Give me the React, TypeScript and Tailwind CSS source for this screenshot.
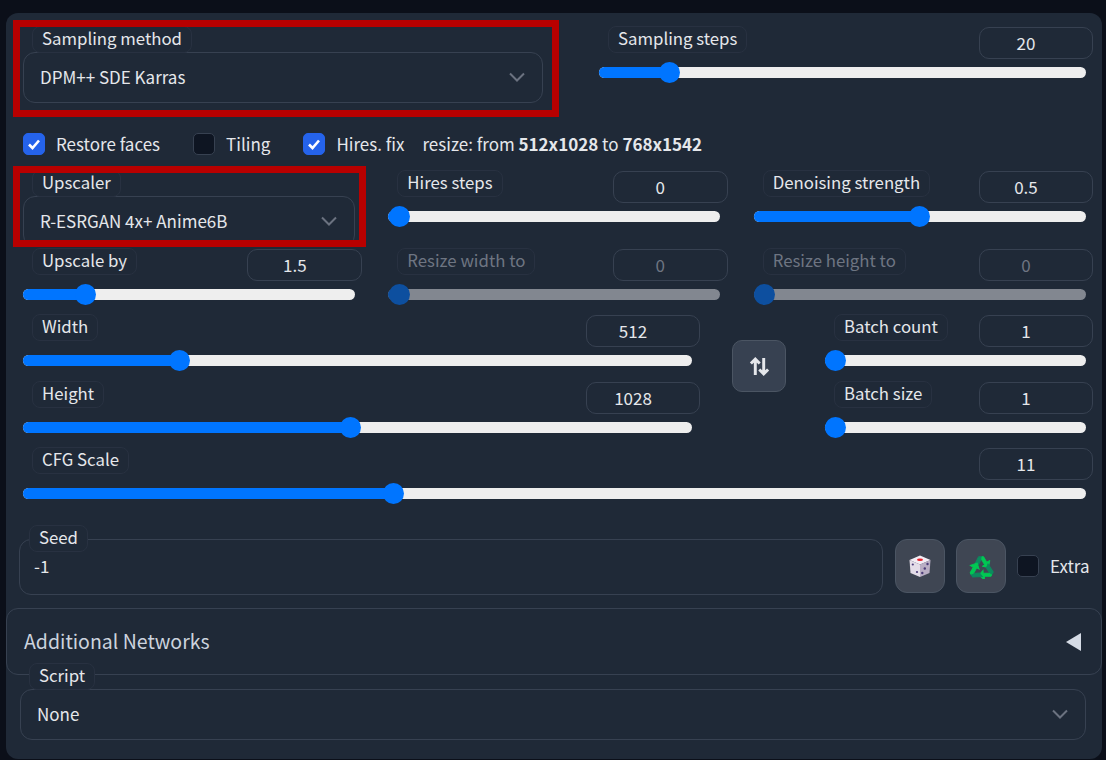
import React from "react";

const Chip = ({ children, disabled, className = "" }: { children: React.ReactNode; disabled?: boolean; className?: string }) => (
  <div className={`relative z-10 flex h-[27px] items-center rounded-[8px] border border-[#283141] bg-[#1f2937] px-[9px] pb-[3px] text-[16.8px] leading-none whitespace-nowrap ${disabled ? "text-[#6e7582]" : "text-[#e5e7eb]"} ${className}`}>
    {children}
  </div>
);

const Slider = ({ label, value, thumb, disabled, trackRight = 7, inputW = 115, className = "" }: { label: string; value: string; thumb: number; disabled?: boolean; trackRight?: number; inputW?: number; className?: string }) => (
  <div className={`h-[58px] ${className}`}>
    <div className="flex h-[35px] items-start justify-between pl-[9px]">
      <Chip disabled={disabled}>{label}</Chip>
      <div style={{ width: inputW }} className={`mt-[1px] flex h-[32px] items-center justify-center rounded-[10px] border border-[#374151] pb-[2px] pr-[20px] text-[17px] leading-none ${disabled ? "border-[#2b3545] text-[#6e7582]" : "text-[#e5e7eb]"}`}>
        {value}
      </div>
    </div>
    <div style={{ marginRight: trackRight }} className={`relative mt-[6px] h-[11px] rounded-full ${disabled ? "bg-[#828790]" : "bg-[#eeeeee]"}`}>
      <div style={{ width: thumb }} className={`absolute left-0 top-0 h-full rounded-full ${disabled ? "bg-[#0d4f9f]" : "bg-[#0075ff]"}`} />
      <div style={{ left: thumb - 10.5 }} className={`absolute top-[-5px] h-[21px] w-[21px] rounded-full ${disabled ? "bg-[#0d4f9f]" : "bg-[#0075ff]"}`} />
    </div>
  </div>
);

const Chevron = ({ className = "" }: { className?: string }) => (
  <svg viewBox="0 0 18 12" className={`h-[12px] w-[18px] ${className}`} fill="none" stroke="#6b7280" strokeWidth="2">
    <path d="M2 2.5 L9 9.5 L16 2.5" />
  </svg>
);

const Select = ({ label, value, className = "" }: { label: string; value: string; className?: string }) => (
  <div className={className}>
    <div className="flex pl-[9px]">
      <Chip className="mb-[-1px]">{label}</Chip>
    </div>
    <div className="flex h-[51px] items-center justify-between rounded-[12px] border border-[#374151] pb-[2px] pl-[16px] pr-[16px] text-[17px] text-[#e5e7eb]">
      <span>{value}</span>
      <Chevron />
    </div>
  </div>
);

const Check = ({ on, label, className = "" }: { on?: boolean; label: string; className?: string }) => (
  <div className={`flex items-center gap-[11px] ${className}`}>
    <div className={`flex h-[22px] w-[22px] items-center justify-center rounded-[5px] border ${on ? "border-[#2563eb] bg-[#2563eb]" : "border-[#374151] bg-[#0e1522]"}`}>
      {on && (
        <svg viewBox="0 0 16 16" className="h-[16px] w-[16px]" fill="none" stroke="#fff" strokeWidth="2.6">
          <path d="M3 8.5 L6.5 12 L13 4.5" />
        </svg>
      )}
    </div>
    <span className="text-[17px] text-[#e5e7eb]">{label}</span>
  </div>
);

const Dice = () => (
  <svg viewBox="0 0 24 24" className="h-[24px] w-[24px]">
    <path d="M12 1.5 L22.5 6 L12 10.5 L1.5 6 Z" fill="#f3edf5" />
    <path d="M1.5 6 L12 10.5 V23 L2.5 19 Z" fill="#e4dde8" />
    <path d="M22.5 6 L12 10.5 V23 L21.5 19 Z" fill="#b9aec4" />
    <ellipse cx="12" cy="5.8" rx="3" ry="1.3" fill="#e8222c" />
    <circle cx="4.8" cy="10.5" r="1.1" fill="#4c3d78" />
    <circle cx="9" cy="18" r="1.1" fill="#4c3d78" />
    <circle cx="19.5" cy="10" r="1.2" fill="#4c3d78" />
    <circle cx="16.8" cy="14.5" r="1.2" fill="#4c3d78" />
    <circle cx="14.3" cy="19" r="1.2" fill="#4c3d78" />
  </svg>
);

const Arrow = ({ rotate }: { rotate: number }) => (
  <g transform={`rotate(${rotate} 12 14)`}>
    <path d="M5 10.8 L9.2 2.6 H13 L9.2 10.2 Z" fill="#0c8a5e" stroke="#0c8a5e" strokeWidth="0.9" />
    <path d="M12.5 2.6 H14 L17 7.8 L20 6.2 L18.6 13 L12.8 11.8 L15 10.4 L12.2 5.6 Z" fill="#00c853" stroke="#00c853" strokeWidth="0.9" />
  </g>
);

const Recycle = () => (
  <svg viewBox="0 0 24 24" className="h-[25px] w-[25px]">
    <Arrow rotate={0} />
    <Arrow rotate={120} />
    <Arrow rotate={240} />
  </svg>
);

export default function App() {
  return (
    <div className="h-[760px] w-[1106px] overflow-hidden bg-[#0b0f19] pl-[6px] pt-[13px] font-['Noto_Sans_CJK_SC','Noto_Sans',sans-serif]">
      <div className="relative h-[746px] w-[1096px] rounded-[12px] bg-[#1f2937] pl-[17px] pr-[9px] pt-[13px]">
        {/* red annotation boxes */}
        <div className="pointer-events-none absolute left-[7px] top-[7px] z-20 h-[97px] w-[546px] border-[7px] border-[#b80000]" />
        <div className="pointer-events-none absolute left-[7px] top-[153px] z-20 h-[81px] w-[353px] border-[7px] border-[#b80000]" />

        <div className="flex">
          <Select label="Sampling method" value="DPM++ SDE Karras" className="w-[520px]" />
          <Slider label="Sampling steps" value="20" thumb={70} inputW={114} className="ml-[56px] w-[494px]" />
        </div>

        <div className="mt-[29px] flex h-[24px] items-center">
          <Check on label="Restore faces" />
          <Check label="Tiling" className="ml-[33px]" />
          <Check on label="Hires. fix" className="ml-[33px]" />
          <span className="ml-[18px] text-[17px] text-[#e5e7eb]">
            resize: from <b className="font-semibold">512x1028</b> to <b className="font-semibold">768x1542</b>
          </span>
        </div>

        <div className="mt-[14px] grid grid-cols-3 gap-x-[26px] gap-y-[1px]">
          <Select label="Upscaler" value="R-ESRGAN 4x+ Anime6B" className="mr-[7px]" />
          <Slider label="Hires steps" value="0" thumb={11} trackRight={8} />
          <Slider label="Denoising strength" value="0.5" thumb={166} inputW={114} />
          <Slider label="Upscale by" value="1.5" thumb={62} />
          <Slider label="Resize width to" value="0" thumb={11} trackRight={8} disabled />
          <Slider label="Resize height to" value="0" thumb={11} disabled inputW={114} />
        </div>

        <div className="mt-[8px] flex">
          <div className="w-[677px]">
            <Slider label="Width" value="512" thumb={156} trackRight={8} inputW={114} />
            <Slider label="Height" value="1028" thumb={327} trackRight={8} inputW={114} className="mt-[9px]" />
          </div>
          <button className="ml-[32px] mt-[26px] flex h-[52px] w-[54px] items-center justify-center rounded-[10px] border border-[#4b5563] bg-[#374151]">
            <svg viewBox="0 0 20 20" className="h-[21px] w-[21px]" fill="none" stroke="#e5e7eb" strokeWidth="2.8">
              <path d="M6 18 V3 M1.8 7.2 L6 3 L10.2 7.2" />
              <path d="M14 2 V17 M9.8 12.8 L14 17 L18.2 12.8" />
            </svg>
          </button>
          <div className="ml-[39px] w-[268px]">
            <Slider label="Batch count" value="1" thumb={10} inputW={114} />
            <Slider label="Batch size" value="1" thumb={10} inputW={114} className="mt-[9px]" />
          </div>
        </div>

        <Slider label="CFG Scale" value="11" thumb={370} inputW={114} className="mt-[8px]" />

        <div className="mt-[20px] flex h-[70px] items-start">
          <div className="ml-[-4px] w-[864px]">
            <div className="flex pl-[10px]">
              <Chip>Seed</Chip>
            </div>
            <div className="mt-[-13px] h-[56px] rounded-[12px] border border-[#374151] pl-[14px] pt-[12px] text-[17px] leading-[28px] text-[#e5e7eb]">-1</div>
          </div>
          <button className="ml-[12px] mt-[14px] flex h-[54px] w-[50px] items-center justify-center rounded-[12px] border border-[#4b5563] bg-[#3f4653]">
            <Dice />
          </button>
          <button className="ml-[11px] mt-[14px] flex h-[54px] w-[50px] items-center justify-center rounded-[12px] border border-[#4b5563] bg-[#3f4653]">
            <Recycle />
          </button>
          <Check label="Extra" className="ml-[11px] mt-[28px]" />
        </div>

        <div className="ml-[-17px] mt-[13px] flex h-[67px] w-[1096px] items-center justify-between rounded-[12px] border border-[#374151] pl-[17px] pr-[20px]">
          <span className="pb-[1px] text-[19.5px] text-[#ccd3de]">Additional Networks</span>
          <svg viewBox="0 0 15 18" className="h-[18px] w-[15px]">
            <path d="M15 0 V18 L0 9 Z" fill="#d5dbe5" />
          </svg>
        </div>

        <Select label="Script" value="None" className="ml-[-3px] mr-[7px] mt-[-12px]" />
      </div>
    </div>
  );
}
